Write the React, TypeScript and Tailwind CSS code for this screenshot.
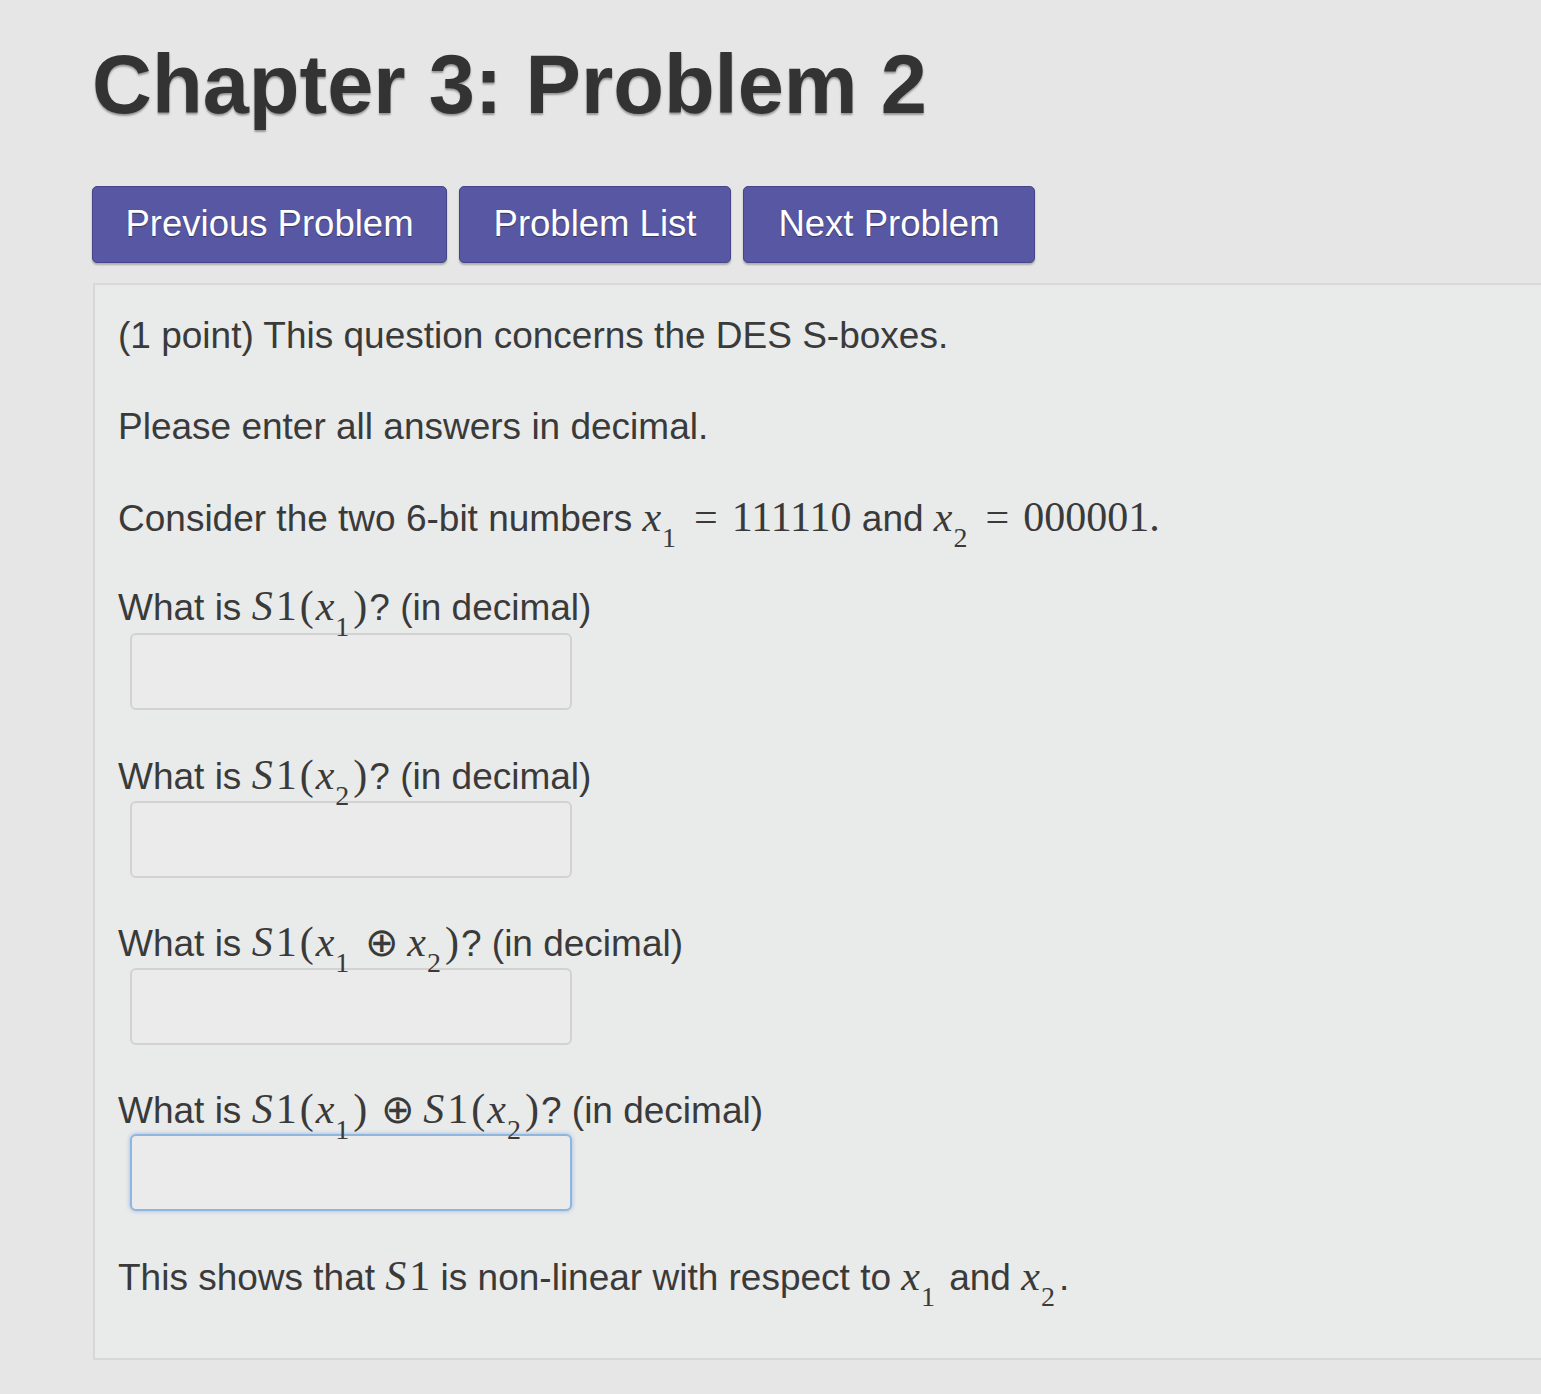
import React from "react";

const serif = "font-['Liberation_Serif','Times_New_Roman',serif]";

function V({ n, sub }: { n: string; sub?: string }) {
  return (
    <span className={`${serif} text-[42px] italic`}>
      {n}
      {sub && <sub className="not-italic text-[28px] align-[-9px] leading-none ml-[1px] mr-[4px]">{sub}</sub>}
    </span>
  );
}

function M({ children, cls = "" }: { children: React.ReactNode; cls?: string }) {
  return <span className={`${serif} text-[42px] ${cls}`}>{children}</span>;
}

function Eq() {
  return <span className={`${serif} text-[42px] mx-[14px]`}>=</span>;
}

function Label({ children }: { children: React.ReactNode }) {
  return <div className="h-[40px] leading-[40px] whitespace-nowrap">{children}</div>;
}

function Input({ active }: { active?: boolean }) {
  return (
    <div
      className={`ml-[12px] w-[442px] h-[77px] rounded-[6px] bg-[#ebebeb] border-2 ${
        active ? "border-[#8fb6de] shadow-[0_0_4px_rgba(100,150,220,0.6)]" : "border-[#d2d2d2]"
      }`}
    />
  );
}

const S1 = () => (
  <>
    <span className={`${serif} text-[42px] italic mr-[3px]`}>S</span>
    <M>1</M>
  </>
);

const L = () => <M cls="ml-[3px] mr-[2px]">(</M>;
const R = () => <M cls="mr-[2px]">)</M>;

const XOR = () => <span className={`${serif} text-[40px] ml-[12px] mr-[8px]`}>⊕</span>;

export default function App() {
  return (
    <div className="min-h-[1394px] w-[1541px] overflow-hidden bg-[#e6e6e6] font-['Liberation_Sans',Arial,sans-serif] text-[#3b3b3b]">
      <div className="pl-[92px] pt-[37px]">
        <h1 className="text-[83px] leading-[96px] font-bold text-[#333333] [text-shadow:0_2px_2px_rgba(0,0,0,0.35)]">
          Chapter 3: Problem 2
        </h1>
        <div className="mt-[53px] flex gap-[12px]">
          {[
            ["Previous Problem", "w-[355px]"],
            ["Problem List", "w-[272px]"],
            ["Next Problem", "w-[292px]"],
          ].map(([t, w]) => (
            <div
              key={t}
              className={`${w} h-[77px] rounded-[5px] bg-[#5857a3] border border-[#46458a] shadow-[0_2px_2px_rgba(0,0,0,0.25)] flex items-center justify-center text-white text-[36.5px] [text-shadow:0_1px_1px_rgba(0,0,0,0.4)]`}
            >
              {t}
            </div>
          ))}
        </div>
        <div className="mt-[20px] ml-[1px] w-[1480px] h-[1077px] bg-[#e9eaea] border-2 border-[#d8d8d8] pt-[31px] pl-[23px] text-[37px] text-[#3a3a3a]">
          <Label>(1 point) This question concerns the DES S-boxes.</Label>
          <div className="mt-[51px]">
            <Label>Please enter all answers in decimal.</Label>
          </div>
          <div className="mt-[50px]">
            <Label>
              Consider the two 6-bit numbers <V n="x" sub="1" />
              <Eq />
              <M cls="text-[41px]">111110</M> and <V n="x" sub="2" />
              <Eq />
              <M cls="text-[41px]">000001.</M>
            </Label>
          </div>
          <div className="mt-[49px]">
            <Label>
              What is <S1 />
              <L />
              <V n="x" sub="1" />
              <R />? (in decimal)
            </Label>
          </div>
          <div className="mt-[7px]">
            <Input />
          </div>
          <div className="mt-[45px]">
            <Label>
              What is <S1 />
              <L />
              <V n="x" sub="2" />
              <R />? (in decimal)
            </Label>
          </div>
          <div className="mt-[6px]">
            <Input />
          </div>
          <div className="mt-[44px]">
            <Label>
              What is <S1 />
              <L />
              <V n="x" sub="1" />
              <XOR />
              <V n="x" sub="2" />
              <R />? (in decimal)
            </Label>
          </div>
          <div className="mt-[6px]">
            <Input />
          </div>
          <div className="mt-[44px]">
            <Label>
              What is <S1 />
              <L />
              <V n="x" sub="1" />
              <R />
              <XOR />
              <S1 />
              <L />
              <V n="x" sub="2" />
              <R />? (in decimal)
            </Label>
          </div>
          <div className="mt-[5px]">
            <Input active />
          </div>
          <div className="mt-[45px]">
            <Label>
              This shows that <S1 /> is non-linear with respect to <V n="x" sub="1" /> and <V n="x" sub="2" />.
            </Label>
          </div>
        </div>
      </div>
    </div>
  );
}
